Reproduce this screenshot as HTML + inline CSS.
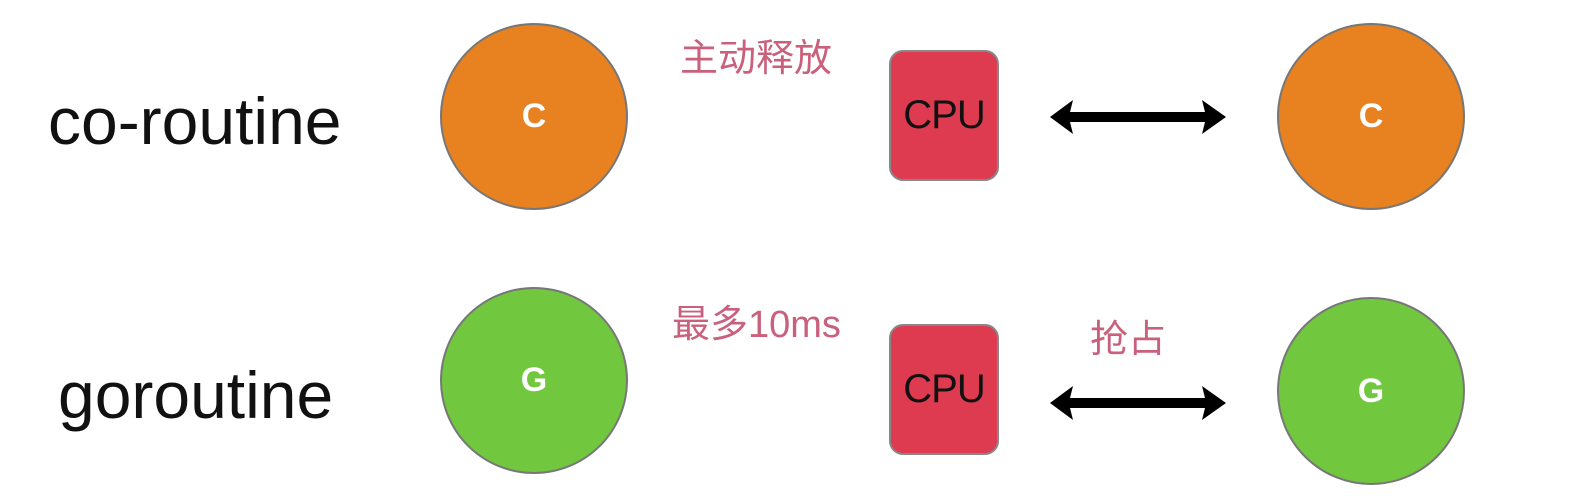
<!DOCTYPE html>
<html><head><meta charset="utf-8"><style>
html,body{margin:0;padding:0;background:#fff;width:1584px;height:501px;overflow:hidden;position:relative;font-family:"Liberation Sans","Noto Sans CJK SC",sans-serif}
.a{position:absolute}
.circ{position:absolute;border-radius:50%;border:2px solid #777;box-sizing:border-box;color:#fff;font-weight:bold;font-size:34px;display:flex;align-items:center;justify-content:center}
.o{background:#e8811f}.g{background:#71c83e}
.cpu{position:absolute;width:110px;height:131px;background:#de3b50;border:2px solid #888;box-sizing:border-box;border-radius:14px;display:flex;align-items:center;justify-content:center;font-size:40px;color:#111;letter-spacing:-1px}
.lbl{position:absolute;font-size:66px;color:#111;line-height:1}
.cn{position:absolute;font-size:38px;color:#c9607c;line-height:1}
</style></head><body>
<div class="lbl" style="left:48px;top:88px">co-routine</div>
<div class="lbl" style="left:58px;top:362px">goroutine</div>
<div class="circ o" style="left:440px;top:23px;width:188px;height:187px">C</div>
<div class="circ o" style="left:1277px;top:23px;width:188px;height:187px">C</div>
<div class="circ g" style="left:440px;top:287px;width:188px;height:187px">G</div>
<div class="circ g" style="left:1277px;top:297px;width:188px;height:188px">G</div>
<div class="cpu" style="left:889px;top:50px">CPU</div>
<div class="cpu" style="left:889px;top:324px">CPU</div>
<div class="cn" style="left:680px;top:40px">主动释放</div>
<div class="cn" style="left:672px;top:306px">最多10ms</div>
<div class="cn" style="left:1090px;top:321px">抢占</div>
<svg class="a" style="left:1045px;top:97px" width="186" height="40"><path d="M5 20 L28 3 L25 15 L160 15 L157 3 L181 20 L157 37 L160 25 L25 25 L28 37 Z" fill="#000"/></svg>
<svg class="a" style="left:1045px;top:383px" width="186" height="40"><path d="M5 20 L28 3 L25 15 L160 15 L157 3 L181 20 L157 37 L160 25 L25 25 L28 37 Z" fill="#000"/></svg>
</body></html>
